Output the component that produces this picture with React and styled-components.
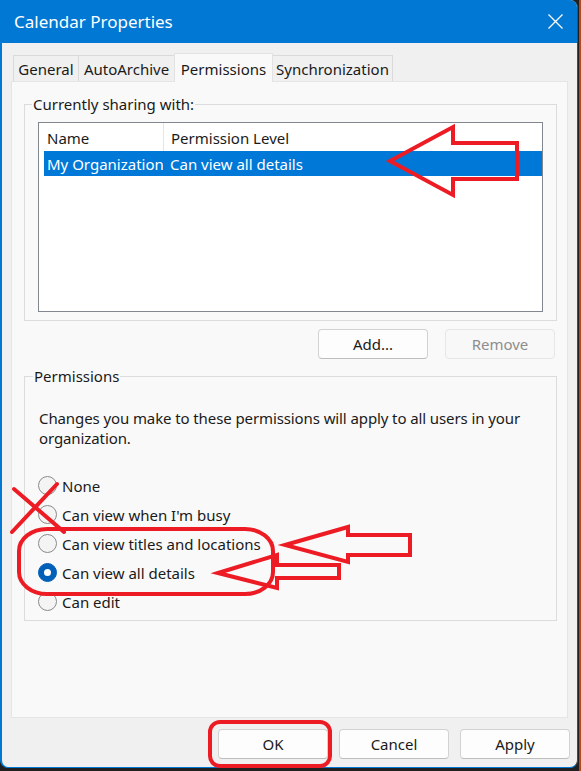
import React from "react";
import styled, { createGlobalStyle } from "styled-components";

const GlobalStyle = createGlobalStyle`
  html, body {
    margin: 0;
    padding: 0;
  }
  body {
    width: 581px;
    height: 771px;
    overflow: hidden;
    background: linear-gradient(to right, #202020 579px, #b8461e 579px);
    font-family: "Noto Sans", "Open Sans", sans-serif;
    color: #1a1a1a;
  }
  * {
    box-sizing: border-box;
  }
`;

const Dialog = styled.div`
  position: relative;
  width: 578px;
  height: 768px;
  display: flex;
  flex-direction: column;
  background: #f0f0f0;
  border: 1px solid #0078d4;
  border-top: none;
  border-left-width: 2px;
  border-right-color: #4a4a4a;
  border-radius: 0 8px 8px 8px;
`;

const TitleBar = styled.div`
  height: 43px;
  flex: none;
  display: flex;
  align-items: center;
  justify-content: space-between;
  padding: 0 14px 0 12px;
  background: #0078d4;
  color: #fff;
  font-size: 17px;
  border-top-right-radius: 7px;
`;

const CloseButton = styled.div`
  width: 15px;
  height: 15px;
  display: flex;
  svg {
    display: block;
  }
`;

const Content = styled.div`
  display: flex;
  flex-direction: column;
  padding: 12px 9px 0 9px;
`;

const Tabs = styled.div`
  height: 26px;
  display: flex;
  align-items: flex-end;
  margin-left: 2px;
`;

const Tab = styled.div`
  position: relative;
  z-index: ${(p) => (p.$active ? 2 : 1)};
  width: ${(p) => p.$w}px;
  height: ${(p) => (p.$active ? 29 : 26)}px;
  margin-bottom: ${(p) => (p.$active ? -1 : 0)}px;
  display: flex;
  align-items: center;
  justify-content: center;
  padding-top: 1px;
  background: ${(p) => (p.$active ? "#f9f9f9" : "#f0f0f0")};
  border: 1px solid ${(p) => (p.$active ? "#e2e2e2" : "#dadada")};
  border-bottom: none;
  font-size: 15px;
  color: #1a1a1a;
  & + & {
    margin-left: -1px;
  }
`;

const TabPanel = styled.div`
  height: 637px;
  display: flex;
  flex-direction: column;
  padding: 12px 10px 0 12px;
  background: #f9f9f9;
  border: 1px solid #e5e5e5;
`;

const Group = styled.fieldset`
  margin: 0;
  min-width: 0;
  border: 1px solid #dcdcdc;
  padding: ${(p) => p.$pad};
  legend {
    padding: 0 1px;
    margin-left: -6px;
    font-size: 15px;
    line-height: 20px;
    color: #1a1a1a;
  }
`;

const ListBox = styled.div`
  height: 190px;
  background: #fff;
  border: 1px solid #82878f;
  padding: 0 0 0 5px;
`;

const ListRow = styled.div`
  display: grid;
  grid-template-columns: 119px 1fr;
  height: ${(p) => (p.$header ? 28 : 25)}px;
  background: ${(p) => (p.$selected ? "#0078d7" : "transparent")};
  color: ${(p) => (p.$selected ? "#fff" : "#1a1a1a")};
  font-size: 15px;
`;

const Cell = styled.div`
  display: flex;
  align-items: center;
  padding-left: ${(p) => (p.$second ? 7 : 3)}px;
  white-space: nowrap;
  overflow: hidden;
  border-left: ${(p) => (p.$divider ? "1px solid #e5e5e5" : "none")};
  padding-top: ${(p) => (p.$header ? 2 : 0)}px;
`;

const ButtonRow = styled.div`
  display: flex;
  justify-content: flex-end;
  gap: ${(p) => p.$gap}px;
  margin: ${(p) => p.$margin};
`;

const Button = styled.div`
  width: 110px;
  height: 30px;
  display: flex;
  align-items: center;
  justify-content: center;
  border-radius: 4px;
  font-size: 15px;
  background: ${(p) => (p.$disabled ? "#f8f8f8" : "#fdfdfd")};
  color: ${(p) => (p.$disabled ? "#8d8d8d" : "#1a1a1a")};
  border: 1px solid ${(p) => (p.$disabled ? "#e6e6e6" : "#d2d2d2")};
  border-bottom-color: ${(p) => (p.$disabled ? "#e6e6e6" : "#bdbdbd")};
`;

const Description = styled.p`
  margin: 0 0 23px 0;
  font-size: 15px;
  line-height: 20px;
  letter-spacing: -0.1px;
  color: #1a1a1a;
`;

const RadioRow = styled.div`
  height: 29px;
  display: flex;
  align-items: center;
  gap: 5px;
  margin-left: -1px;
  font-size: 15px;
  color: #1a1a1a;
`;

const RadioCircle = styled.span`
  flex: none;
  width: 19px;
  height: 19px;
  border-radius: 50%;
  display: flex;
  align-items: center;
  justify-content: center;
  background: ${(p) => (p.$checked ? "#005fb8" : "#f4f4f4")};
  border: 1px solid ${(p) => (p.$checked ? "#005fb8" : "#8a8a8a")};
  &::after {
    content: "";
    display: ${(p) => (p.$checked ? "block" : "none")};
    width: 7px;
    height: 7px;
    border-radius: 50%;
    background: #fff;
  }
`;

const Annotations = styled.svg`
  position: absolute;
  top: 0;
  left: -2px;
  width: 581px;
  height: 771px;
  pointer-events: none;
  z-index: 10;
  overflow: visible;
`;

const permissionOptions = [
  { label: "None" },
  { label: "Can view when I'm busy" },
  { label: "Can view titles and locations" },
  { label: "Can view all details", checked: true },
  { label: "Can edit" },
];

const tabs = [
  { label: "General", w: 66 },
  { label: "AutoArchive", w: 97 },
  { label: "Permissions", w: 99, active: true },
  { label: "Synchronization", w: 121 },
];

function RedMarks() {
  const red = "#ed1c24";
  return (
    <Annotations viewBox="0 0 581 771">
      <g fill="none" stroke={red} strokeWidth="4" strokeLinejoin="miter">
        <polygon points="390,161 453,127 453,143 517,143 517,179 453,179 453,195" />
        <line x1="14" y1="489" x2="64" y2="532" strokeLinecap="round" />
        <line x1="57" y1="484" x2="12" y2="532" strokeLinecap="round" />
        <rect x="19" y="529" width="254" height="65" rx="28" ry="22" />
        <polygon points="285,545 348,527 348,535 410,535 410,555 348,555 348,562" />
        <polygon points="218,573 277,555 277,565 339,565 339,578 277,578 277,588" />
        <rect x="210" y="722" width="120" height="44" rx="10" ry="10" />
      </g>
    </Annotations>
  );
}

export default function App() {
  return (
    <>
      <GlobalStyle />
      <Dialog>
        <TitleBar>
          <span>Calendar Properties</span>
          <CloseButton>
            <svg width="15" height="15" viewBox="0 0 15 15">
              <path d="M0.5 0.5 L14.5 14.5 M14.5 0.5 L0.5 14.5" stroke="#fff" strokeWidth="1.3" />
            </svg>
          </CloseButton>
        </TitleBar>
        <Content>
          <Tabs>
            {tabs.map((t) => (
              <Tab key={t.label} $w={t.w} $active={t.active}>
                {t.label}
              </Tab>
            ))}
          </Tabs>
          <TabPanel>
            <Group $pad="8px 13px 8px 13px">
              <legend>Currently sharing with:</legend>
              <ListBox>
                <ListRow $header>
                  <Cell $header>Name</Cell>
                  <Cell $header $divider $second>
                    Permission Level
                  </Cell>
                </ListRow>
                <ListRow $selected>
                  <Cell>My Organization</Cell>
                  <Cell $second>Can view all details</Cell>
                </ListRow>
              </ListBox>
            </Group>
            <ButtonRow $gap={17} $margin="8px 2px 7px 0">
              <Button>Add...</Button>
              <Button $disabled>Remove</Button>
            </ButtonRow>
            <Group $pad="22px 14px 4px 14px">
              <legend>Permissions</legend>
              <Description>
                Changes you make to these permissions will apply to all users in your organization.
              </Description>
              {permissionOptions.map((o) => (
                <RadioRow key={o.label}>
                  <RadioCircle $checked={o.checked} />
                  {o.label}
                </RadioRow>
              ))}
            </Group>
          </TabPanel>
          <ButtonRow $gap={11} $margin="11px -2px 0 0">
            <Button>OK</Button>
            <Button>Cancel</Button>
            <Button>Apply</Button>
          </ButtonRow>
        </Content>
        <RedMarks />
      </Dialog>
    </>
  );
}
